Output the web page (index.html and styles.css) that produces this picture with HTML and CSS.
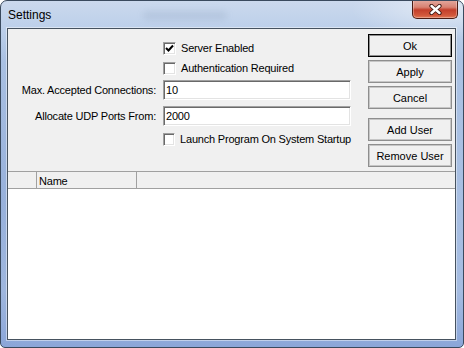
FILE: index.html
```html
<!DOCTYPE html>
<html lang="en">
<head>
  <meta charset="UTF-8" />
  <title>Settings</title>
  <link rel="stylesheet" href="styles.css">
</head>
<body>
  <div class="window">
    <div class="titlebar">
      <span class="title">Settings</span>
      <span class="glass-blur"></span>
      <button class="close-btn" aria-label="Close">
        <svg width="13" height="11" viewBox="0 0 13 11">
          <path d="M2.5 2 L10.5 9 M10.5 2 L2.5 9" stroke="#3b1712" stroke-width="4.2" stroke-linecap="round" fill="none"/>
          <path d="M2.5 2 L10.5 9 M10.5 2 L2.5 9" stroke="#fff" stroke-width="2.4" stroke-linecap="round" fill="none"/>
        </svg>
      </button>
    </div>

    <div class="client">
      <div class="top">
        <div class="form">
          <span></span>
          <label class="check">
            <span class="box">
              <svg width="9" height="9" viewBox="0 0 9 9"><path d="M1 4 L3.5 6.5 L8 1.5" stroke="#000" stroke-width="2" fill="none"/></svg>
            </span>
            Server Enabled
          </label>

          <span></span>
          <label class="check"><span class="box"></span>Authentication Required</label>

          <label class="field-label" for="maxConn">Max. Accepted Connections:</label>
          <input class="textbox" id="maxConn" value="10" />

          <label class="field-label" for="udpFrom">Allocate UDP Ports From:</label>
          <input class="textbox" id="udpFrom" value="2000" />

          <span></span>
          <label class="check"><span class="box"></span>Launch Program On System Startup</label>
        </div>

        <div class="buttons">
          <button class="btn default-btn">Ok</button>
          <button class="btn">Apply</button>
          <button class="btn">Cancel</button>
          <button class="btn spaced">Add User</button>
          <button class="btn">Remove User</button>
        </div>
      </div>

      <!-- User list -->
      <div class="list">
        <div class="list-header">
          <div class="col col-icon"></div>
          <div class="col col-name">Name</div>
          <div class="col col-rest"></div>
        </div>
        <div class="list-body"></div>
      </div>
    </div>
  </div>
</body>
</html>
```

FILE: styles.css
```css
* {
  margin: 0;
  padding: 0;
  box-sizing: border-box;
}

body {
  background: #fff;
  font-family: 'Liberation Sans', Arial, sans-serif;
  font-size: 11px;
  color: #000;
  overflow: hidden;
}

.window {
  width: 464px;
  height: 348px;
  border: 1px solid #3a4a5e;
  border-radius: 7px 7px 5px 5px;
  display: flex;
  flex-direction: column;
  overflow: hidden;
  background:
    radial-gradient(ellipse 90px 30px at 440px 8px, rgba(255,255,255,0.45), transparent),
    radial-gradient(ellipse 40px 160px at 0 200px, rgba(120,150,205,0.35), transparent),
    linear-gradient(to bottom, #cbd9ed 0, #bdd0ea 26px, #abc2e3 60px, #a5bce1 290px, #8aa5d8 348px);
}

/* Title bar */
.titlebar {
  height: 27px;
  display: flex;
  align-items: flex-start;
  padding-left: 7px;
}

.title {
  font-size: 12px;
  line-height: 14px;
  margin-top: 7px;
  color: #000;
}

.glass-blur {
  width: 84px;
  height: 9px;
  margin: 10px 0 0 92px;
  border-radius: 5px;
  background: rgba(95, 115, 150, 0.13);
  filter: blur(3px);
}

.close-btn {
  width: 46px;
  height: 19px;
  margin: -1px 5px 0 auto;
  border: 1px solid #4a1c14;
  border-top: none;
  border-radius: 0 0 5px 5px;
  background: linear-gradient(to bottom, #e3aaa0 0, #d88272 40%, #c33f2b 55%, #d2583c 85%, #e27a58 100%);
  box-shadow: inset 0 0 0 1px rgba(255,255,255,0.3);
  display: flex;
  align-items: center;
  justify-content: center;
  cursor: pointer;
}

/* Client area */
.client {
  margin: 0 7px 7px 6px;
  height: 312px;
  border: 1px solid #46525f;
  box-shadow: 0 0 0 1px rgba(255,255,255,0.45);
  background: #f0f0f0;
  display: flex;
  flex-direction: column;
}

.top {
  display: flex;
  height: 142px;
}

.form {
  display: grid;
  grid-template-columns: 148px 188px;
  grid-template-rows: 20px 20px 24px 28px 18px;
  column-gap: 7px;
  align-items: center;
  align-content: start;
  padding-top: 9px;
  letter-spacing: -0.2px;
}

.field-label {
  text-align: right;
  white-space: nowrap;
}

.check {
  display: flex;
  align-items: center;
  gap: 5px;
  white-space: nowrap;
}

.box {
  width: 13px;
  height: 13px;
  background: #fff;
  border: 1px solid;
  border-color: #a0a0a0 #fff #fff #a0a0a0;
  box-shadow: inset 1px 1px #696969, inset -1px -1px #e3e3e3;
  display: flex;
  align-items: center;
  justify-content: center;
}

.textbox {
  width: 188px;
  height: 20px;
  padding: 0 2px;
  border: 1px solid;
  border-color: #a0a0a0 #fff #fff #a0a0a0;
  box-shadow: inset 1px 1px #696969, inset -1px -1px #e3e3e3;
  background: #fff;
  font: inherit;
  letter-spacing: inherit;
  color: #000;
  outline: none;
}

.buttons {
  width: 84px;
  margin-left: 17px;
  padding-top: 5px;
  display: flex;
  flex-direction: column;
  gap: 3px;
}

.btn {
  height: 23px;
  background: #f0f0f0;
  border: 1px solid #8e8e8e;
  box-shadow: inset 0 0 0 1px #c6c6c6;
  font: inherit;
  color: #000;
  cursor: pointer;
}

.default-btn {
  border-color: #000;
  box-shadow: inset 0 0 0 1px #8e8e8e;
}

.spaced {
  margin-top: 6px;
}

/* List view */
.list {
  flex: 1;
  display: flex;
  flex-direction: column;
  border-top: 1px solid #a0a0a0;
  background: #fff;
}

.list-header {
  display: flex;
  height: 17px;
  background: #f0f0f0;
  border-bottom: 1px solid #a0a0a0;
}

.col {
  border-right: 1px solid #a0a0a0;
  line-height: 16px;
  padding-top: 1px;
}

.col-icon {
  width: 29px;
}

.col-name {
  width: 100px;
  padding-left: 2px;
  letter-spacing: -0.2px;
}

.col-rest {
  flex: 1;
  border-right: none;
}

.list-body {
  flex: 1;
}
```
